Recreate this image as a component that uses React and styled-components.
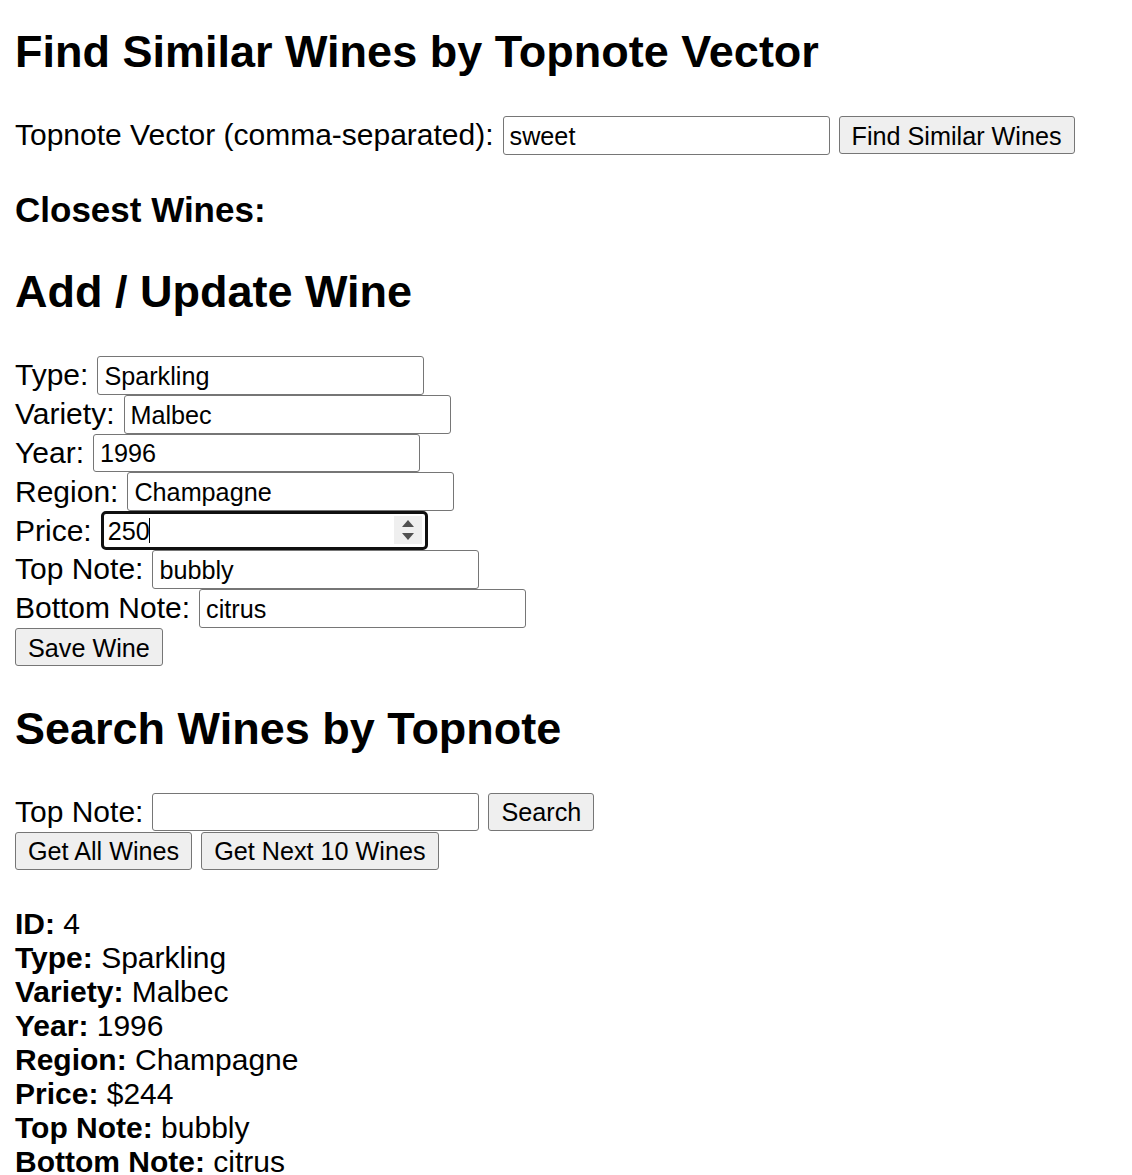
import styled, { createGlobalStyle } from 'styled-components';

const GlobalStyle = createGlobalStyle`
  body {
    margin: 0;
    background: #fff;
    color: #000;
    font-family: "Liberation Sans", Arial, sans-serif;
  }
`;

const Page = styled.div`
  padding: 0 15px;
  font-size: 30px;
  line-height: 34px;
`;

const Title = styled.h1`
  margin: ${(p) => p.$top}px 0 0;
  font-size: 45px;
  line-height: 51px;
  font-weight: bold;
`;

const SubTitle = styled.h3`
  margin: ${(p) => p.$top}px 0 0;
  font-size: 35px;
  line-height: 40px;
  font-weight: bold;
`;

const Form = styled.form`
  margin-top: ${(p) => p.$top}px;
`;

const Row = styled.div`
  display: flex;
  align-items: center;
  gap: 9px;
  height: 38.85px;
  margin-top: ${(p) => p.$top || 0}px;
`;

const Label = styled.label`
  white-space: nowrap;
`;

const TextInput = styled.input`
  box-sizing: border-box;
  width: 327px;
  height: 38.85px;
  margin: 0;
  padding: 2px 6px 0;
  border: 1px solid #767676;
  border-radius: 3px;
  background: #fff;
  color: #000;
  font-family: "Liberation Sans", Arial, sans-serif;
  font-size: 25.2px;
  outline: none;

  &::-webkit-inner-spin-button,
  &::-webkit-outer-spin-button {
    -webkit-appearance: none;
    margin: 0;
  }
`;

const FocusField = styled.div`
  position: relative;
  display: flex;

  ${TextInput} {
    border: 3px solid #101010;
    border-radius: 5px;
    padding-left: 4px;
    -moz-appearance: textfield;
  }
`;

const Caret = styled.span`
  position: absolute;
  left: 48px;
  top: 7px;
  width: 1.5px;
  height: 25px;
  background: #000;
`;

const Spinner = styled.span`
  position: absolute;
  right: 6px;
  top: 5px;
  width: 28px;
  height: 28px;
  background: #efefef;
  display: flex;
  align-items: center;
  justify-content: center;
`;

const Button = styled.button`
  box-sizing: border-box;
  height: 38px;
  margin: 0;
  padding: 2px 12px 0;
  border: 1px solid #767676;
  border-radius: 3px;
  background: #efefef;
  color: #000;
  font-family: "Liberation Sans", Arial, sans-serif;
  font-size: 25.2px;
  line-height: 1;
  white-space: nowrap;
`;

const Details = styled.div`
  margin-top: ${(p) => p.$top}px;
`;

const Line = styled.div`
  height: 34px;
`;

const Key = styled.strong`
  font-weight: bold;
`;

const formFields = [
  ['Type', 'Sparkling'],
  ['Variety', 'Malbec'],
  ['Year', '1996'],
  ['Region', 'Champagne'],
];

const wine = [
  ['ID', '4'],
  ['Type', 'Sparkling'],
  ['Variety', 'Malbec'],
  ['Year', '1996'],
  ['Region', 'Champagne'],
  ['Price', '$244'],
  ['Top Note', 'bubbly'],
  ['Bottom Note', 'citrus'],
];

const App = () => {
  return (
    <Page>
      <GlobalStyle />
      <Title $top={26}>Find Similar Wines by Topnote Vector</Title>
      <Row $top={39}>
        <Label>Topnote Vector (comma-separated):</Label>
        <TextInput type="text" defaultValue="sweet" />
        <Button type="button">Find Similar Wines</Button>
      </Row>
      <SubTitle $top={35}>Closest Wines:</SubTitle>

      <Title $top={36}>Add / Update Wine</Title>
      <Form $top={39} onSubmit={(e) => e.preventDefault()}>
        {formFields.map(([name, value]) => (
          <Row key={name}>
            <Label>{name}:</Label>
            <TextInput type="text" defaultValue={value} />
          </Row>
        ))}
        <Row>
          <Label>Price:</Label>
          <FocusField>
            <TextInput type="number" defaultValue="250" />
            <Caret />
            <Spinner>
              <svg width="14" height="22" viewBox="0 0 14 22">
                <path d="M7 1 L13 8 L1 8 Z" fill="#505050" />
                <path d="M1 14 L13 14 L7 21 Z" fill="#505050" />
              </svg>
            </Spinner>
          </FocusField>
        </Row>
        <Row>
          <Label>Top Note:</Label>
          <TextInput type="text" defaultValue="bubbly" />
        </Row>
        <Row>
          <Label>Bottom Note:</Label>
          <TextInput type="text" defaultValue="citrus" />
        </Row>
        <Row>
          <Button type="submit">Save Wine</Button>
        </Row>
      </Form>

      <Title $top={36}>Search Wines by Topnote</Title>
      <Row $top={39}>
        <Label>Top Note:</Label>
        <TextInput type="text" />
        <Button type="button">Search</Button>
      </Row>
      <Row>
        <Button type="button">Get All Wines</Button>
        <Button type="button">Get Next 10 Wines</Button>
      </Row>

      <Details $top={37}>
        {wine.map(([k, v]) => (
          <Line key={k}>
            <Key>{k}:</Key> {v}
          </Line>
        ))}
      </Details>
    </Page>
  );
};

export default App;
